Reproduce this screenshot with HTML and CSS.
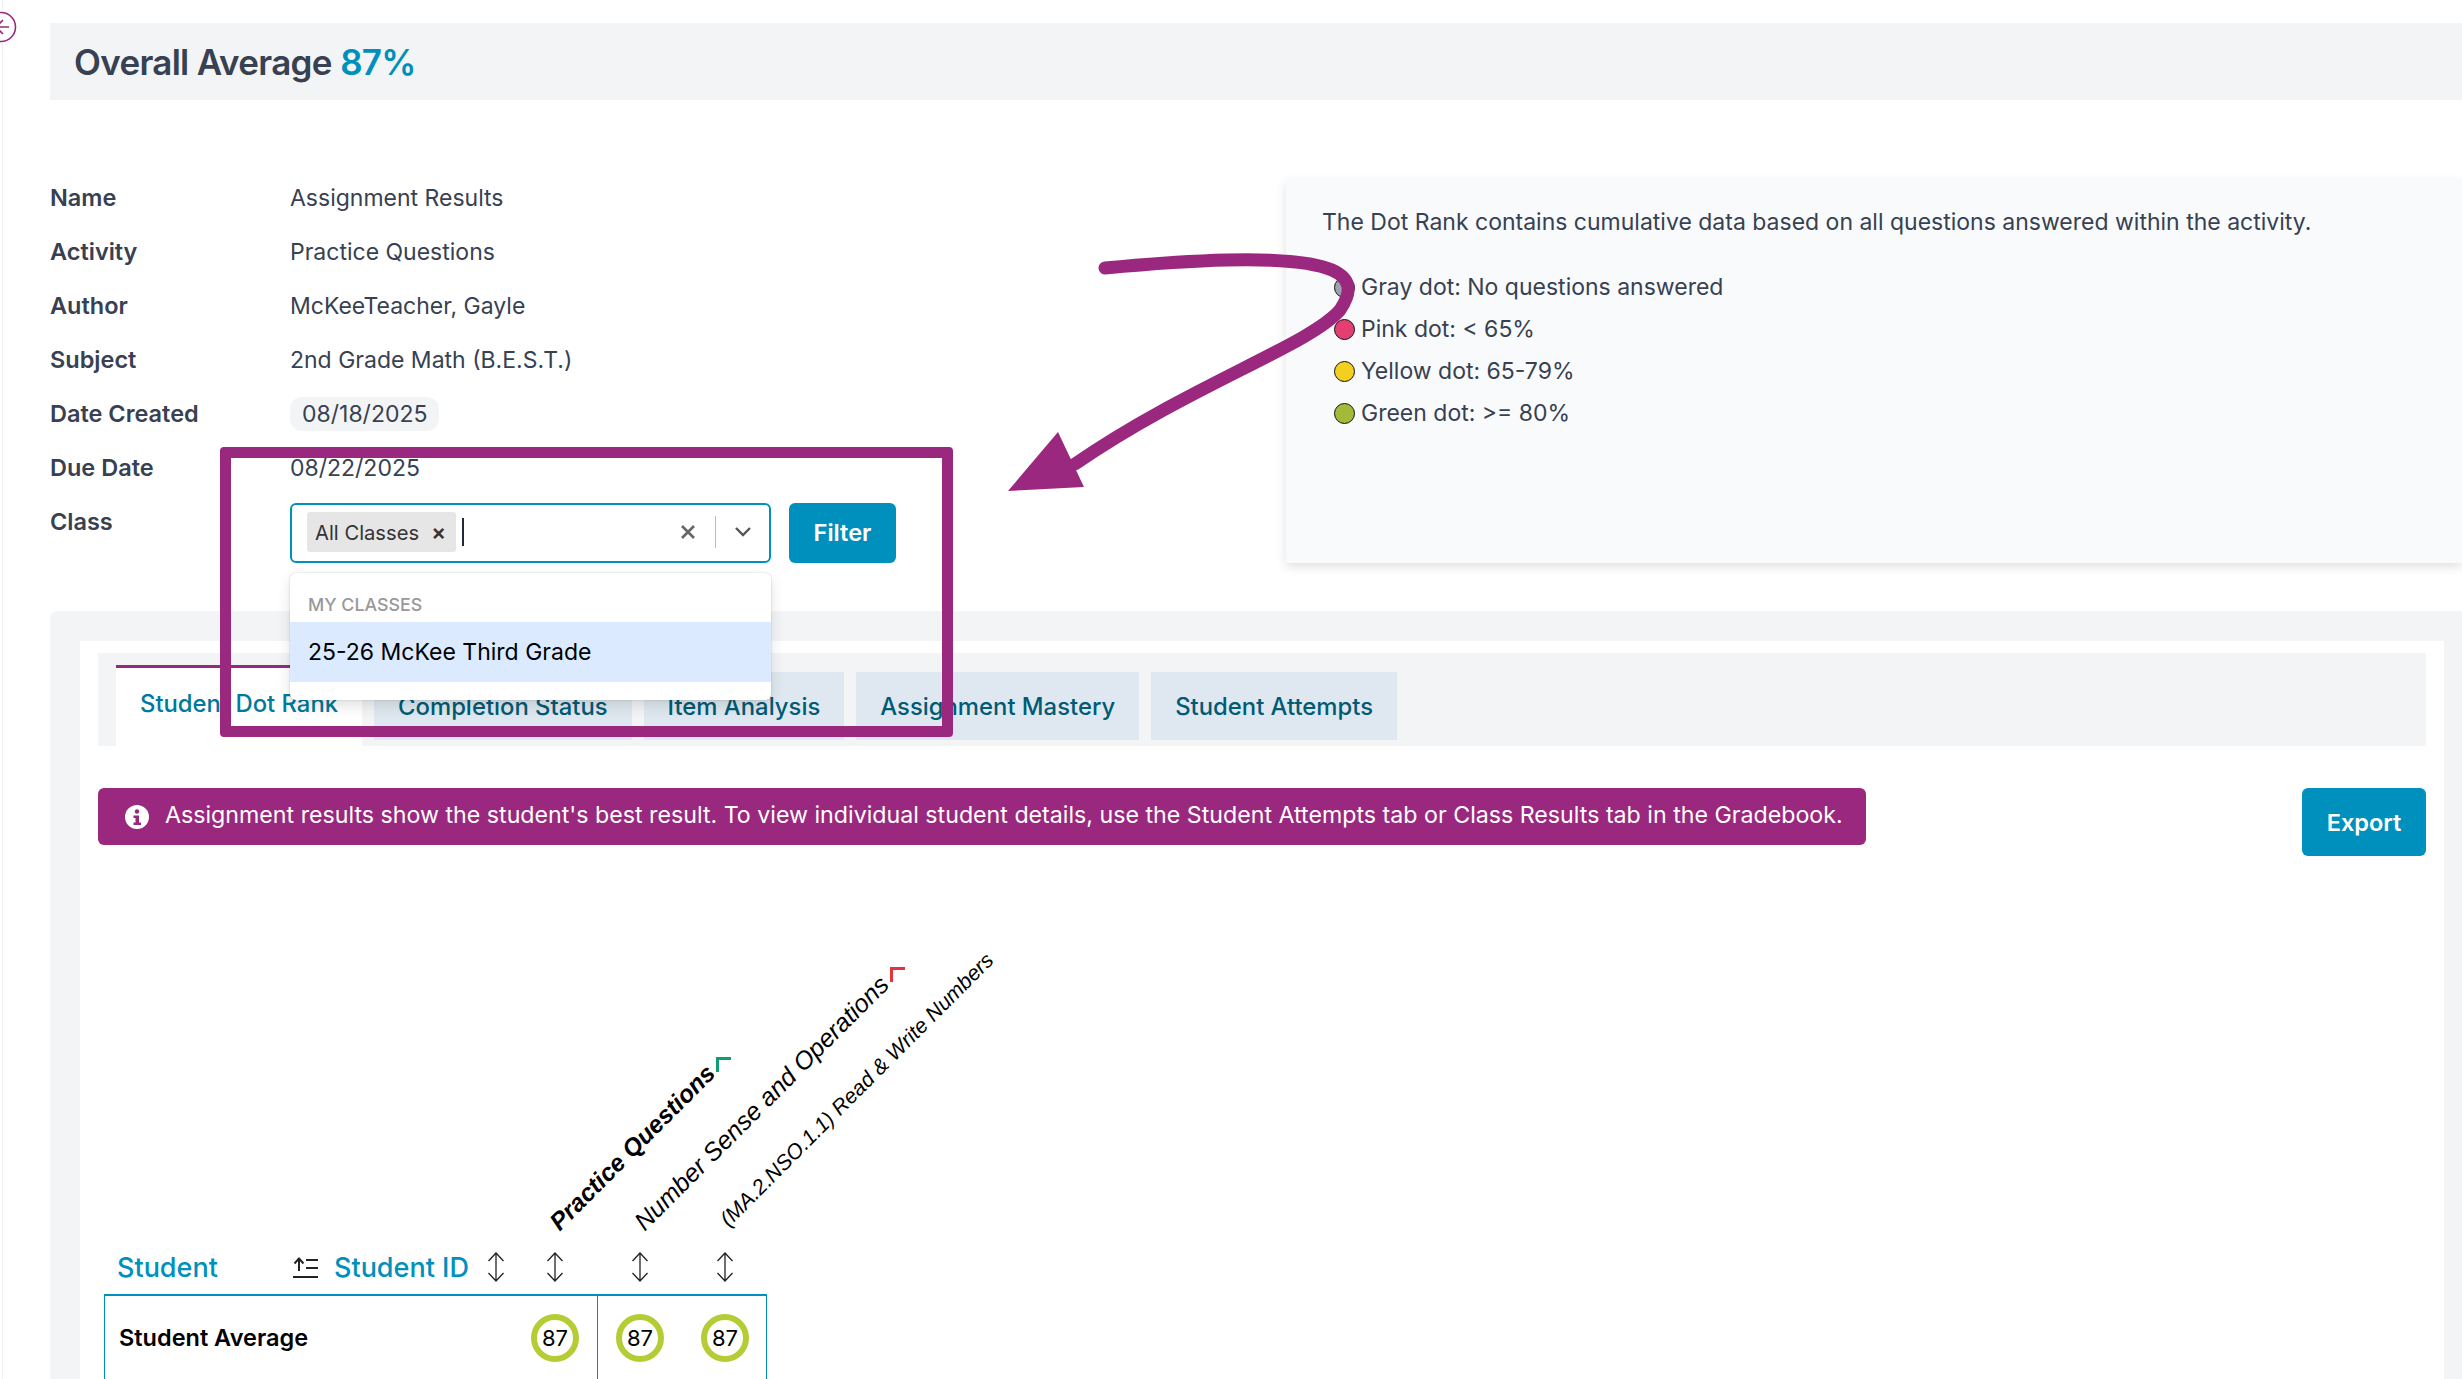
FILE: index.html
```html
<!DOCTYPE html>
<html lang="en">
<head>
  <meta charset="UTF-8">
  <title>Assignment Results</title>
  <link rel="stylesheet" href="styles.css">
</head>
<body>
  <div class="side-rail"></div>
  <svg class="collapse-icon" width="18" height="32" viewBox="0 0 18 32">
    <circle cx="1" cy="16" r="14.5" fill="#fff" stroke="#9b287f" stroke-width="1.6"/>
    <path d="M-4 16H9M3 9l-7 7 7 7" fill="none" stroke="#9b287f" stroke-width="1.6"/>
  </svg>

  <main class="main">
    <div class="overall">Overall Average <span class="overall-value">87%</span></div>

    <section class="info">
      <div class="details">
        <div class="row"><div class="label">Name</div><div class="value">Assignment Results</div></div>
        <div class="row"><div class="label">Activity</div><div class="value">Practice Questions</div></div>
        <div class="row"><div class="label">Author</div><div class="value">McKeeTeacher, Gayle</div></div>
        <div class="row"><div class="label">Subject</div><div class="value">2nd Grade Math (B.E.S.T.)</div></div>
        <div class="row"><div class="label">Date Created</div><div class="value"><span class="date-pill">08/18/2025</span></div></div>
        <div class="row"><div class="label">Due Date</div><div class="value">08/22/2025</div></div>
        <div class="row row-class">
          <div class="label">Class</div>
          <div class="filter">
            <div class="select">
              <div class="chip"><span>All Classes</span><span class="chip-x">×</span></div>
              <div class="cursor"></div>
              <svg class="clear" width="16" height="16" viewBox="0 0 16 16"><path d="M2 2l12 12M14 2L2 14" stroke="#666" stroke-width="2.6"/></svg>
              <div class="select-sep"></div>
              <svg class="chevron" width="18" height="12" viewBox="0 0 18 12"><path d="M2 2l7 7 7-7" fill="none" stroke="#555" stroke-width="2.4"/></svg>
              <div class="menu">
                <div class="menu-group">MY CLASSES</div>
                <div class="menu-item">25-26 McKee Third Grade</div>
              </div>
            </div>
            <button class="btn btn-filter">Filter</button>
          </div>
        </div>
      </div>

      <aside class="legend">
        <p class="legend-intro">The Dot Rank contains cumulative data based on all questions answered within the activity.</p>
        <div class="legend-row"><span class="dot dot-gray"></span>Gray dot: No questions answered</div>
        <div class="legend-row"><span class="dot dot-pink"></span>Pink dot: &lt; 65%</div>
        <div class="legend-row"><span class="dot dot-yellow"></span>Yellow dot: 65-79%</div>
        <div class="legend-row"><span class="dot dot-green"></span>Green dot: &gt;= 80%</div>
      </aside>
    </section>

    <section class="results">
      <div class="results-inner">
        <div class="tabs">
          <div class="tab tab-active">Student Dot Rank</div>
          <div class="tab">Completion Status</div>
          <div class="tab">Item Analysis</div>
          <div class="tab">Assignment Mastery</div>
          <div class="tab">Student Attempts</div>
        </div>

        <div class="notice-row">
          <div class="notice">
            <svg class="notice-icon" width="24" height="24" viewBox="0 0 24 24">
              <circle cx="12" cy="12" r="12" fill="#fff"/>
              <circle cx="12" cy="6.5" r="2.2" fill="#9b287f"/>
              <path d="M8.5 10.5h5.500v7h2v2.500h-7.500v-2.500h2v-4.500h-2z" fill="#9b287f"/>
            </svg>
            <span>Assignment results show the student's best result. To view individual student details, use the Student Attempts tab or Class Results tab in the Gradebook.</span>
          </div>
          <button class="btn btn-export">Export</button>
        </div>

        <div class="chart-head">
          <div class="slant slant-bold slant-one">Practice Questions</div>
          <div class="slant slant-two">Number Sense and Operations</div>
          <div class="slant slant-small slant-three">(MA.2.NSO.1.1) Read &amp; Write Numbers</div>
          <div class="corner corner-green"></div>
          <div class="corner corner-red"></div>
        </div>

        <div class="thead">
          <span class="th-student">Student</span>
          <svg class="sort-asc" width="27" height="22" viewBox="0 0 27 22">
            <path d="M7 15V3M2.5 7.5L7 2.5 11.5 7.5" fill="none" stroke="#222" stroke-width="2"/>
            <path d="M14 4h12M14 12h12M1 21h25" fill="none" stroke="#222" stroke-width="2"/>
          </svg>
          <span class="th-id">Student ID</span>
          <svg class="sort sort-a" width="18" height="30" viewBox="0 0 18 30"><path d="M9 1v28M1.5 9L9 1l7.5 8M1.5 21L9 29l7.5-8" fill="none" stroke="#222" stroke-width="1.3"/></svg>
          <svg class="sort sort-b" width="18" height="30" viewBox="0 0 18 30"><path d="M9 1v28M1.5 9L9 1l7.5 8M1.5 21L9 29l7.5-8" fill="none" stroke="#222" stroke-width="1.3"/></svg>
          <svg class="sort sort-c" width="18" height="30" viewBox="0 0 18 30"><path d="M9 1v28M1.5 9L9 1l7.5 8M1.5 21L9 29l7.5-8" fill="none" stroke="#222" stroke-width="1.3"/></svg>
          <svg class="sort sort-c" width="18" height="30" viewBox="0 0 18 30"><path d="M9 1v28M1.5 9L9 1l7.5 8M1.5 21L9 29l7.5-8" fill="none" stroke="#222" stroke-width="1.3"/></svg>
        </div>

        <div class="tr">
          <div class="td td-name">
            <span>Student Average</span>
            <span class="score">87</span>
          </div>
          <div class="td td-scores">
            <span class="score">87</span>
            <span class="score">87</span>
          </div>
        </div>
      </div>
    </section>
  </main>

  <!-- annotation drawn over the screenshot -->
  <div class="callout-box"></div>
  <svg class="callout-arrow" width="2462" height="1379" viewBox="0 0 2462 1379">
    <path d="M1105 268C1170 262 1290 252 1332 270C1352 279 1352 292 1340 310C1310 345 1190 385 1075 464" fill="none" stroke="#9b287f" stroke-width="13" stroke-linecap="round"/>
    <path d="M1058 432L1008 491L1084 487Z" fill="#9b287f"/>
  </svg>
</body>
</html>
```

FILE: styles.css
```css
* {
  box-sizing: border-box;
}
body {
  margin: 0;
  width: 2462px;
  height: 1379px;
  overflow: hidden;
  position: relative;
  background-color: #fff;
  font-family: Inter, "Noto Sans", sans-serif;
  font-size: 23px;
  color: #374151;
}
.side-rail {
  position: absolute;
  left: 0;
  top: 0;
  bottom: 0;
  width: 3px;
  border-right: 1px solid #f1f1f3;
}
.collapse-icon {
  position: absolute;
  left: 0;
  top: 11px;
}
.main {
  padding: 23px 0 0 50px;
}
.overall {
  height: 77px;
  padding-left: 24px;
  display: flex;
  align-items: center;
  gap: 0.24em;
  background-color: #f3f4f6;
  font-size: 35px;
  font-weight: 600;
  letter-spacing: -0.7px;
}
.overall-value {
  color: #0090bd;
}

/* info block */
.info {
  display: flex;
  height: 511px;
}
.details {
  width: 1236px;
  padding-top: 70.5px;
}
.row {
  display: flex;
  align-items: center;
  height: 54px;
}
.label {
  width: 240px;
  font-weight: 600;
  font-size: 23.5px;
}
.date-pill {
  display: inline-block;
  padding: 3px 12px;
  margin-top: 1px;
  background-color: #f3f4f6;
  border-radius: 12px;
}
.row-class {
  align-items: flex-start;
}
.row-class .label {
  padding-top: 12px;
}
.filter {
  display: flex;
  gap: 18px;
  margin-top: 8.5px;
}
.select {
  position: relative;
  width: 481px;
  height: 60px;
  display: flex;
  align-items: center;
  padding: 0 0 2px 15px;
  border: 2px solid #0090bd;
  border-radius: 6px;
  background-color: #fff;
}
.chip {
  width: 149px;
  height: 40px;
  padding: 0 8px;
  display: flex;
  align-items: center;
  justify-content: space-between;
  background-color: #e6e6e6;
  border-radius: 3px;
  color: #333;
  font-size: 20.2px;
}
.chip-x {
  font-size: 22px;
  font-weight: 600;
  margin-right: 2px;
}
.cursor {
  width: 1.5px;
  height: 28px;
  margin-left: 6px;
  background-color: #1f2937;
}
.clear {
  margin-left: 216px;
}
.select-sep {
  width: 1px;
  height: 32px;
  margin-left: 19px;
  background-color: #bbb;
}
.chevron {
  margin-left: 18px;
}
.menu {
  position: absolute;
  left: -2px;
  right: -2px;
  top: 68px;
  height: 127px;
  padding-top: 16px;
  background-color: #fff;
  border-radius: 6px;
  box-shadow: 0 0 2px rgba(0, 0, 0, 0.2), 0 6px 14px rgba(0, 0, 0, 0.12);
  z-index: 5;
}
.menu-group {
  height: 30px;
  padding-left: 18px;
  display: flex;
  align-items: center;
  color: #999;
  font-size: 17.8px;
  font-weight: 500;
}
.menu-item {
  height: 60px;
  padding-left: 18px;
  display: flex;
  align-items: center;
  background-color: #dbeafe;
  color: #000;
  margin-top: 3px;
}
.btn {
  border: none;
  border-radius: 6px;
  background-color: #0090bd;
  color: #fff;
  font-family: inherit;
  font-size: 23.5px;
  font-weight: 600;
}
.btn-filter {
  width: 107px;
  height: 60px;
  padding-bottom: 3px;
}
.btn-export {
  width: 124px;
  height: 68px;
}

/* legend panel */
.legend {
  flex: 1;
  height: 384px;
  margin-top: 79px;
  padding: 25px 36px;
  background-color: #f9fafb;
  box-shadow: 0 4px 10px rgba(0, 0, 0, 0.12);
}
.legend-intro {
  margin: 0 0 26px;
  line-height: 36px;
}
.legend-row {
  display: flex;
  align-items: center;
  height: 42px;
  padding-left: 12px;
}
.dot {
  width: 21px;
  height: 21px;
  margin-right: 6px;
  border: 1px solid #111;
  border-radius: 50%;
}
.dot-gray { background-color: #9ca3af; }
.dot-pink { background-color: #e53f71; }
.dot-yellow { background-color: #f3d020; }
.dot-green { background-color: #a3b938; }

/* results */
.results {
  height: 800px;
  padding: 30px 18px 0 30px;
  background-color: #f3f4f6;
  border-radius: 8px 0 0 0;
}
.results-inner {
  height: 770px;
  padding: 12px 18px 0;
  background-color: #fff;
}
.tabs {
  display: flex;
  gap: 12px;
  height: 93px;
  padding: 12px 18px 0;
  background-color: #f3f4f6;
}
.tab {
  height: 68px;
  margin-top: 7px;
  padding: 0 24px;
  display: flex;
  align-items: center;
  background-color: #dfe8f0;
  color: #005b75;
  font-size: 23.85px;
  font-weight: 500;
}
.tab-active {
  height: 81px;
  margin-top: 0;
  padding-bottom: 8px;
  border-top: 3px solid #9b287f;
  background-color: #fff;
  color: #007a9c;
}
.notice-row {
  display: flex;
  justify-content: space-between;
  align-items: flex-start;
  margin-top: 42px;
}
.notice {
  width: 1768px;
  height: 57px;
  padding-left: 27px;
  display: flex;
  align-items: center;
  gap: 16px;
  background-color: #9b287f;
  border-radius: 6px;
  color: #fff;
  font-size: 23.2px;
}
.notice span {
  margin-top: -4px;
}

/* slanted column heads */
.chart-head {
  position: relative;
  height: 396px;
}
.slant {
  position: absolute;
  transform-origin: left bottom;
  transform: rotate(-45deg);
  white-space: nowrap;
  font-family: "Liberation Sans", Arial, sans-serif;
  font-style: italic;
  font-size: 25.2px;
  color: #000;
}
.slant-bold {
  font-size: 24.5px;
  font-weight: 700;
}
.slant-small {
  font-size: 21.3px;
}
.slant-one {
  left: 466px;
  bottom: 16px;
}
.slant-two {
  left: 551px;
  bottom: 16px;
}
.slant-three {
  left: 635px;
  bottom: 20px;
}
.corner {
  position: absolute;
  width: 15px;
  height: 15px;
  border-top: 3px solid;
  border-left: 3px solid;
}
.corner-green {
  left: 618px;
  top: 201px;
  color: #0f9d74;
}
.corner-red {
  left: 792px;
  top: 111px;
  color: #e5333a;
}

/* table */
.thead {
  display: flex;
  align-items: center;
  height: 30px;
  padding-left: 19px;
  font-size: 27px;
  font-weight: 500;
  color: #0090bd;
}
.th-student {
  width: 175px;
}
.sort-asc {
  margin-right: 15px;
}
.th-id {
  width: 135px;
}
.sort-a {
  margin-left: 18px;
}
.sort-b {
  margin-left: 41px;
}
.sort-c {
  margin-left: 67px;
}
.tr {
  display: flex;
  width: 663px;
  height: 120px;
  margin: 12px 0 0 6px;
  border: 1px solid #0090bd;
  border-top-width: 2px;
}
.td {
  display: flex;
  align-items: flex-start;
  padding-top: 18px;
}
.td-name {
  width: 493px;
  justify-content: space-between;
  padding-left: 14px;
  padding-right: 18px;
  color: #000;
  font-size: 23.5px;
  font-weight: 600;
  border-right: 1px solid #0090bd;
}
.td-name > span:first-child {
  line-height: 48px;
}
.td-scores {
  flex: 1;
  gap: 37px;
  padding-left: 18px;
}
.score {
  width: 48px;
  height: 48px;
  display: flex;
  align-items: center;
  justify-content: center;
  border: 6px solid #b5cc34;
  border-radius: 50%;
  color: #000;
  font-size: 22px;
  font-weight: 400;
}

/* annotation */
.callout-box {
  position: absolute;
  left: 220px;
  top: 447px;
  width: 733px;
  height: 290px;
  border: 11px solid #9b287f;
  border-radius: 4px;
  z-index: 10;
}
.callout-arrow {
  position: absolute;
  left: 0;
  top: 0;
  z-index: 10;
}
```
